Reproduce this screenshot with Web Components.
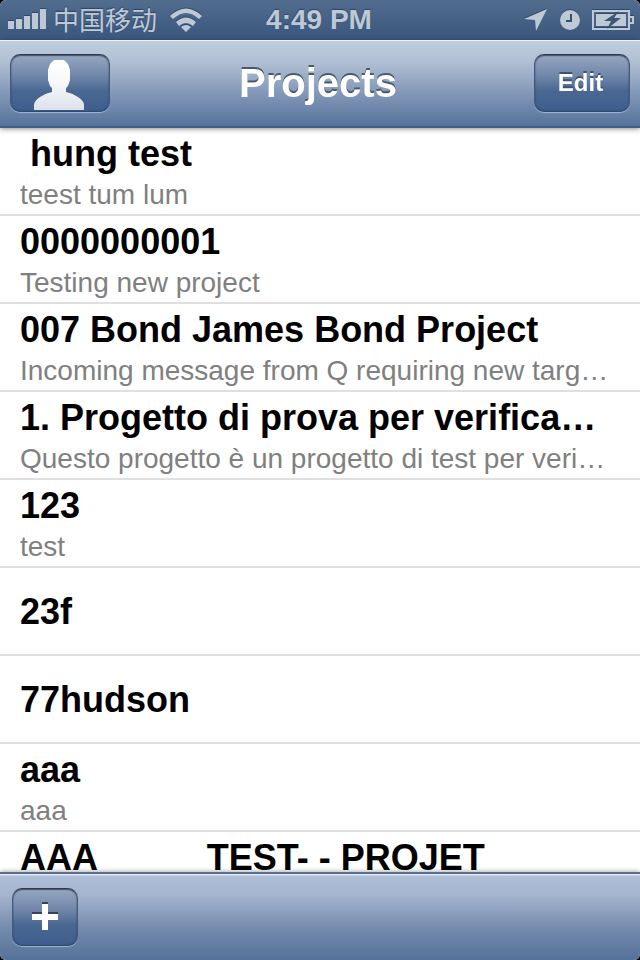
<!DOCTYPE html>
<html lang="en">
<head>
<meta charset="utf-8">
<meta name="viewport" content="width=device-width, initial-scale=1">
<title>Projects</title>
<style>
html, body { margin: 0; height: 100%; background: #000; }
body { font-family: "Liberation Sans", "Noto Sans CJK SC", Arial, sans-serif; }
</style>
</head>
<body>
<projects-app></projects-app>

<template id="t-app">
<style>
:host { display: flex; flex-direction: column; height: 100vh; background: #fff; border-radius: 6px; overflow: hidden; }
project-list { flex: 1; min-height: 0; }
</style>
<status-bar></status-bar>
<nav-bar heading="Projects">
  <bar-button slot="left" label="Profile" kind="profile">
    <svg width="50" height="50" viewBox="0 0 50 50" aria-hidden="true"><defs><linearGradient id="g" x2="0" y2="1"><stop stop-color="#fff"/><stop offset=".45" stop-color="#f7f8fb"/><stop offset="1" stop-color="#dce2ec"/></linearGradient></defs><path fill="url(#g)" d="M20 0h10l4 4 2 6v10l-2 6-2 2v4q6 1 12 5 6 4 6 8v5H0v-5q0-4 6-8 6-4 12-5v-4l-2-2-2-6V10l2-6z"/></svg>
  </bar-button>
  <bar-button slot="right" kind="text">Edit</bar-button>
</nav-bar>
<project-list>
  <project-row heading=" hung test" detail="teest tum lum"></project-row>
  <project-row heading="0000000001" detail="Testing new project"></project-row>
  <project-row heading="007 Bond James Bond Project" detail="Incoming message from Q requiring new targ…"></project-row>
  <project-row heading="1. Progetto di prova per verifica…" detail="Questo progetto è un progetto di test per veri…"></project-row>
  <project-row heading="123" detail="test"></project-row>
  <project-row heading="23f"></project-row>
  <project-row heading="77hudson"></project-row>
  <project-row heading="aaa" detail="aaa"></project-row>
  <project-row heading="AAA           TEST- - PROJET"></project-row>
</project-list>
<tool-bar>
  <bar-button label="Add project" kind="add">
    <svg width="26" height="28" viewBox="0 0 26 28" aria-hidden="true"><path fill="#38434f" d="M10 0h6v10h10v6H16v10h-6V16H0v-6h10z"/><path fill="#fff" d="M10 2h6v10h10v6H16v10h-6V18H0v-6h10z"/></svg>
  </bar-button>
</tool-bar>
</template>

<template id="t-status">
<style>
:host { display: grid; grid-template-columns: 1fr auto 1fr; align-items: center; height: 40px; padding: 0 6px 0 8px; box-sizing: border-box; color: #bfc9d6; background: linear-gradient(#526d8e, #3e5a80 80%, #3d5a80); text-shadow: 0 -1px 1px #2c4465; }
.side { display: flex; align-items: center; }
.right { justify-content: flex-end; gap: 12px; }
.carrier { font-family: "Noto Sans CJK SC", sans-serif; font-size: 26px; line-height: 36px; margin: 0 13px 0 6px; padding-bottom: 2px; }
time { font-size: 28px; font-weight: bold; line-height: 40px; margin-right: 4px; }
svg { display: block; fill: currentColor; filter: drop-shadow(0 -1px 0 #304967); }
.signal { padding-bottom: 2px; }
</style>
<div class="side">
  <svg class="signal" width="39" height="20" viewBox="0 0 39 20" role="img" aria-label="Signal"><path d="M0 12h6v8H0zM8 10h6v10H8zM16 7h6v13h-6zM24 4h6v16h-6zM32 0h6v20h-6z"/></svg>
  <span class="carrier">中国移动</span>
  <svg width="32" height="24" viewBox="0 0 32 24" role="img" aria-label="Wi-Fi"><path d="M0 8Q16-7 32 8l-3 3Q16-1 3 11zM6 14q10-9 20 0l-3 4q-7-6-14 0zM11 19q5-4 10 0l-5 5z"/></svg>
</div>
<time>4:49 PM</time>
<div class="side right">
  <svg width="24" height="24" viewBox="0 0 24 24" role="img" aria-label="Location"><path d="M23 1 12 23l-1-11L0 11z"/></svg>
  <svg width="20" height="20" viewBox="0 0 20 20" role="img" aria-label="Alarm"><circle cx="10" cy="10" r="10"/><path fill="none" stroke="#354f72" stroke-width="2" d="M11 4v7H6"/></svg>
  <svg width="42" height="20" viewBox="0 0 42 20" role="img" aria-label="Battery charging"><path fill="none" stroke="currentColor" stroke-width="2" d="M1 1h36v18H1zM38 7h3v6h-3"/><path d="M4 4h30v12H4z"/><path fill="#3b5679" d="m27 1-15 10h7l-4 8 14-11h-7z"/></svg>
</div>
</template>

<template id="t-nav">
<style>
:host { display: grid; grid-template-columns: 1fr auto 1fr; align-items: center; height: 88px; box-sizing: border-box; padding: 0 10px 2px; position: relative; z-index: 1; border-top: 1px solid #edf1f6; border-bottom: 2px solid #415d87; background: linear-gradient(#c0cddd, #b0bfd3 25%, #8499b9 60%, #56729b); box-shadow: 0 1px 5px rgba(0,0,0,.45); }
h1 { margin: 0 4px 0 0; font-size: 40px; line-height: 48px; color: #fff; text-shadow: 0 -2px 0 #4b586c; }
.right { justify-self: end; }
</style>
<div><slot name="left"></slot></div><h1></h1><div class="right"><slot name="right"></slot></div>
</template>

<template id="t-button">
<style>
:host { display: block; --w: 96px; }
:host([kind="profile"]) { --w: 100px; }
:host([kind="add"]) { --w: 66px; }
button { display: flex; align-items: center; justify-content: center; width: var(--w); height: 58px; padding: 0 3px 0 0; border: 1px solid; border-color: #2f3b49 #41577a #2f4a73; border-radius: 10px; background: linear-gradient(#95a6c1, #7289ab 35%, #4a6792 65%, #3e5e8f); box-shadow: 0 1px 1px rgba(190,205,225,.7), inset 0 1px 1px #46556b, inset 0 0 2px rgba(40,55,75,.5); color: #fff; font: bold 24px/32px "Liberation Sans", Arial, sans-serif; text-shadow: 0 -2px 0 #3f526f; cursor: pointer; }
:host([kind="profile"]) button { align-items: flex-end; padding: 0 2px 1px 0; }
:host([kind="add"]) button { padding: 0 0 2px; }
::slotted(svg) { display: block; }
</style>
<button type="button"><slot></slot></button>
</template>

<template id="t-list">
<style>
:host { display: block; overflow-y: auto; scrollbar-width: none; background: #fff; }
</style>
<div role="list"><slot></slot></div>
</template>

<template id="t-row">
<style>
:host { display: flex; flex-direction: column; justify-content: center; box-sizing: border-box; min-height: 88px; padding: 4px 20px 0; border-bottom: 2px solid #e0e0e0; }
:host(:not([detail])) { padding-top: 2px; }
:host(:last-child) { justify-content: flex-start; padding-top: 4px; }
h2, p { margin: 0; white-space: pre; overflow: hidden; text-overflow: ellipsis; }
h2 { font-size: 36px; line-height: 44px; color: #000; }
p { font-size: 28px; line-height: 38px; color: #808080; }
</style>
<h2></h2><p></p>
</template>

<template id="t-tool">
<style>
:host { display: flex; align-items: center; height: 88px; box-sizing: border-box; padding: 0 12px; position: relative; z-index: 1; border-top: 2px solid #5a6f8e; background: linear-gradient(#e0e7f0 0 1px, #b0bfd8 2px, #a4b4ce 25%, #7189ab 65%, #56719a); box-shadow: 0 -1px 4px rgba(0,0,0,.3); }
</style>
<slot></slot>
</template>

<script>
class Base extends HTMLElement {
  constructor() {
    super();
    this.attachShadow({ mode: "open" });
    this.shadowRoot.append(document.getElementById(this.constructor.template).content.cloneNode(true));
  }
}
class StatusBar extends Base { static template = "t-status"; }
class NavBar extends Base {
  static template = "t-nav";
  connectedCallback() { this.shadowRoot.querySelector("h1").textContent = this.getAttribute("heading"); }
}
class BarButton extends Base {
  static template = "t-button";
  connectedCallback() {
    if (this.hasAttribute("label")) this.shadowRoot.querySelector("button").setAttribute("aria-label", this.getAttribute("label"));
  }
}
class ProjectList extends Base { static template = "t-list"; }
class ProjectRow extends Base {
  static template = "t-row";
  connectedCallback() {
    this.setAttribute("role", "listitem");
    this.shadowRoot.querySelector("h2").textContent = this.getAttribute("heading");
    const p = this.shadowRoot.querySelector("p");
    if (this.hasAttribute("detail")) p.textContent = this.getAttribute("detail");
    else p.remove();
  }
}
class ToolBar extends Base { static template = "t-tool"; }
class ProjectsApp extends Base { static template = "t-app"; }
customElements.define("status-bar", StatusBar);
customElements.define("nav-bar", NavBar);
customElements.define("bar-button", BarButton);
customElements.define("project-list", ProjectList);
customElements.define("project-row", ProjectRow);
customElements.define("tool-bar", ToolBar);
customElements.define("projects-app", ProjectsApp);
</script>
</body>
</html>
